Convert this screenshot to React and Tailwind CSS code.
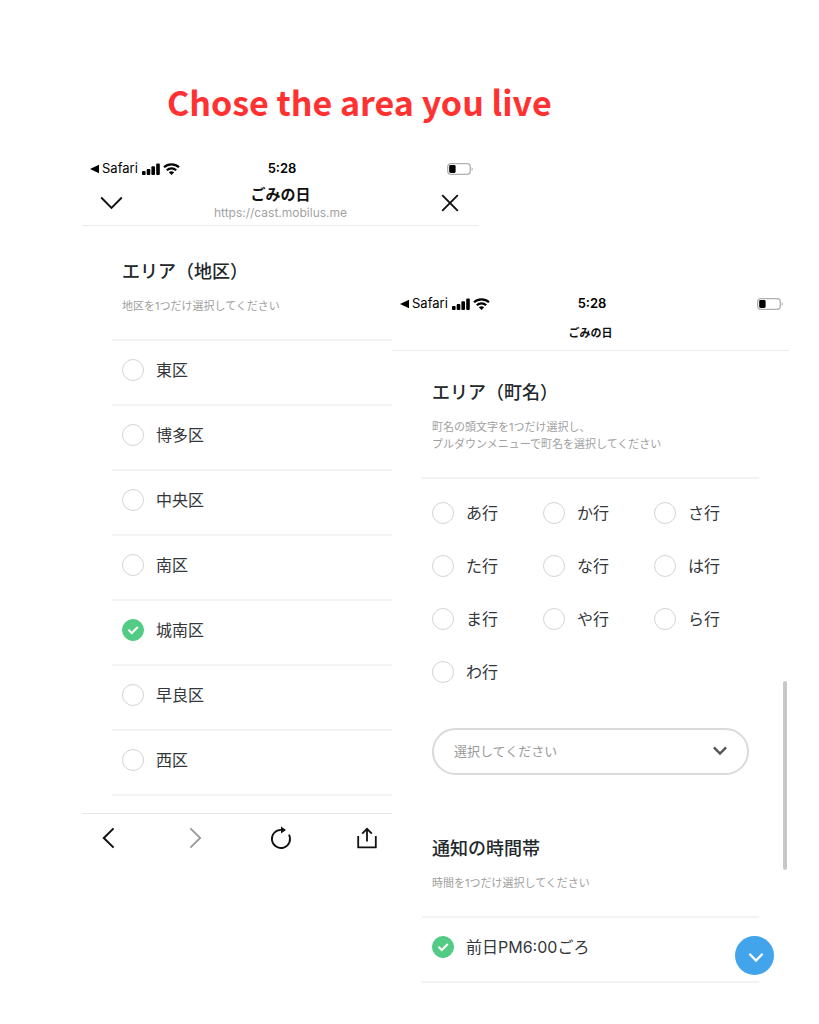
import React, { useState } from "react";

const areas = ["東区", "博多区", "中央区", "南区", "城南区", "早良区", "西区"];
const kanaRows = ["あ行", "か行", "さ行", "た行", "な行", "は行", "ま行", "や行", "ら行", "わ行"];

function StatusBar() {
  return (
    <div className="grid grid-cols-[1fr_auto_1fr] items-center h-[22px] pl-2 pr-[5px] text-[13px] text-black">
      <div className="flex items-center">
        <svg width="9" height="10" viewBox="0 0 9 10" className="mr-[3px]">
          <path d="M9 0.7v8.6L0 5z" fill="currentColor" />
        </svg>
        <span className="mr-1">Safari</span>
        <svg width="18" height="12" viewBox="0 0 18 12" className="mr-[3px]" fill="currentColor">
          <rect x="0" y="8" width="3.6" height="4" rx="1" />
          <rect x="4.7" y="6" width="3.6" height="6" rx="1" />
          <rect x="9.4" y="3.2" width="3.6" height="8.8" rx="1" />
          <rect x="14.2" y="0.4" width="3.6" height="11.6" rx="1" />
        </svg>
        <svg width="17" height="12" viewBox="0 0 17 12" fill="none" stroke="currentColor" strokeWidth="2.2">
          <path d="M1 4.3C5.2 0.3 11.8 0.3 16 4.3" />
          <path d="M3.8 7.2C6.4 4.7 10.6 4.7 13.2 7.2" />
          <path d="M8.5 12L5.8 9.2C7.3 7.8 9.7 7.8 11.2 9.2z" fill="currentColor" stroke="none" />
        </svg>
      </div>
      <span className="font-semibold">5:28</span>
      <svg width="27" height="12" viewBox="0 0 27 12" className="justify-self-end">
        <rect x="0.7" y="0.7" width="22.6" height="10.6" rx="3" fill="none" stroke="#b0b0b0" strokeWidth="1.3" />
        <rect x="2.2" y="2" width="6.4" height="8" rx="1.4" fill="#000" />
        <path d="M24.6 4.2c1.6 0.5 1.6 3.1 0 3.6z" fill="#b0b0b0" />
      </svg>
    </div>
  );
}

function Radio({ name, label, checked, onChange }) {
  return (
    <label className="flex items-center gap-3 text-base text-[#33373b] cursor-pointer">
      <span className="relative flex shrink-0">
        <input
          type="radio"
          name={name}
          value={label}
          checked={checked}
          onChange={onChange}
          className="peer appearance-none size-[22px] rounded-full border border-[#d4d4d4] bg-white checked:border-[#52cb84] checked:bg-[#52cb84]"
        />
        <svg
          viewBox="0 0 22 22"
          className="absolute inset-0 size-[22px] hidden peer-checked:block pointer-events-none"
          fill="none"
          stroke="#fff"
          strokeWidth="2"
        >
          <path d="M6.4 10.8L9.8 14L15.8 8" />
        </svg>
      </span>
      <span>{label}</span>
    </label>
  );
}

function SectionTitle({ title, children }) {
  return (
    <div className="px-[10px] pb-6 border-b-2 border-[#f3f3f3]">
      <h2 className="text-lg leading-7 font-medium text-[#23282c]">{title}</h2>
      <p className="mt-3 text-[11px] leading-[17px] text-[#a0a0a0]">{children}</p>
    </div>
  );
}

function AreaScreen() {
  const [area, setArea] = useState("城南区");

  return (
    <section className="col-start-1 col-span-2 row-start-1 bg-white">
      <StatusBar />
      <header className="grid grid-cols-[1fr_auto_1fr] items-center px-[18px] pt-[5px] pb-1 border-b border-[#ebebeb]">
        <button aria-label="Minimize" className="justify-self-start">
          <svg width="23" height="14" viewBox="0 0 23 14" fill="none" stroke="#111" strokeWidth="1.9">
            <path d="M1.2 1.5L11.5 11.8L21.8 1.5" />
          </svg>
        </button>
        <div className="text-center">
          <h1 className="text-[15px] leading-5 font-bold text-[#111]">ごみの日</h1>
          <p className="text-xs leading-4 text-[#a3a3a3]">https://cast.mobilus.me</p>
        </div>
        <button aria-label="Close" className="justify-self-end">
          <svg width="22" height="22" viewBox="0 0 22 22" fill="none" stroke="#111" strokeWidth="1.9">
            <path d="M3.2 3.2L18.8 18.8M18.8 3.2L3.2 18.8" />
          </svg>
        </button>
      </header>

      <div className="px-[30px] pt-8 pb-[17px]">
        <SectionTitle title="エリア（地区）">地区を1つだけ選択してください</SectionTitle>
        {areas.map((item) => (
          <div key={item} className="flex items-center h-[65px] pb-[6px] px-[10px] border-b-2 border-[#f3f3f3]">
            <Radio name="area" label={item} checked={area === item} onChange={() => setArea(item)} />
          </div>
        ))}
      </div>

      {/* Browser toolbar */}
      <nav className="flex items-center justify-between pl-[15px] pr-[100px] py-3 border-t border-[#e8e8e8]">
        <button aria-label="Back">
          <svg width="24" height="24" viewBox="0 0 24 24" fill="none" stroke="#111" strokeWidth="2">
            <path d="M16.6 2.4L6.8 12L16.6 21.6" />
          </svg>
        </button>
        <button aria-label="Forward">
          <svg width="24" height="24" viewBox="0 0 24 24" fill="none" stroke="#999" strokeWidth="1.8">
            <path d="M7.4 2.4L17.2 12L7.4 21.6" />
          </svg>
        </button>
        <button aria-label="Reload">
          <svg width="24" height="24" viewBox="0 0 24 24" fill="none" stroke="#111" strokeWidth="1.8">
            <path d="M12.4 3.8A9.1 9.1 0 1 0 20 8.6" />
            <path d="M12 0.6L17 4L12 7.4z" fill="#111" stroke="none" />
          </svg>
        </button>
        <button aria-label="Share">
          <svg width="24" height="24" viewBox="0 0 24 24" fill="none" stroke="#111" strokeWidth="1.8">
            <path d="M3.2 10V21.4H20.8V10" strokeLinejoin="round" />
            <path d="M12 15.6V3.2M7.2 7.6L12 2.8L16.8 7.6" />
          </svg>
        </button>
      </nav>
    </section>
  );
}

function TownScreen() {
  const [kana, setKana] = useState("");
  const [time, setTime] = useState("前日PM6:00ごろ");

  return (
    <section className="relative col-start-2 col-span-2 row-start-1 mt-[135px] bg-white">
      <StatusBar />
      <header className="h-9 border-b border-[#ebebeb]">
        <h1 className="text-[11px] leading-9 font-bold text-center text-[#111]">ごみの日</h1>
      </header>

      <div className="px-[30px] pt-7">
        <SectionTitle title="エリア（町名）">
          町名の頭文字を1つだけ選択し、
          <br />
          プルダウンメニューで町名を選択してください
        </SectionTitle>

        <div className="grid grid-cols-3 gap-x-4 px-[10px] pt-[7px]">
          {kanaRows.map((item) => (
            <div key={item} className="flex items-center h-[53px]">
              <Radio name="kana" label={item} checked={kana === item} onChange={() => setKana(item)} />
            </div>
          ))}
        </div>

        <div className="relative mx-[10px] mt-[30px]">
          <select
            aria-label="町名"
            className="block appearance-none w-full h-[47px] rounded-full border-2 border-[#dadada] bg-white px-5 text-[13px] text-[#999]"
          >
            <option>選択してください</option>
          </select>
          <svg
            width="14"
            height="10"
            viewBox="0 0 14 10"
            className="absolute right-[22px] top-[18px] pointer-events-none"
            fill="none"
            stroke="#555"
            strokeWidth="2.4"
          >
            <path d="M0.9 1.4L7 7.6L13.1 1.4" />
          </svg>
        </div>

        <div className="pt-[60px]">
          <SectionTitle title="通知の時間帯">時間を1つだけ選択してください</SectionTitle>
          <div className="flex items-center h-[65px] pb-[6px] px-[10px] border-b-2 border-[#f3f3f3]">
            <Radio
              name="time"
              label="前日PM6:00ごろ"
              checked={time === "前日PM6:00ごろ"}
              onChange={() => setTime("前日PM6:00ごろ")}
            />
          </div>
        </div>
      </div>

      {/* Scroll indicator */}
      <div className="absolute right-[2px] top-[388px] w-1 h-[189px] rounded-full bg-[#c8c8c8]" />

      <button
        aria-label="Scroll down"
        className="absolute right-[15px] bottom-[8px] size-[39px] rounded-full bg-[#42a5ec] flex items-center justify-center"
      >
        <svg width="16" height="12" viewBox="0 0 16 12" fill="none" stroke="#fff" strokeWidth="2.2" className="mt-1 ml-[2px]">
          <path d="M1.4 1.8L8 8.6L14.6 1.8" />
        </svg>
      </button>
    </section>
  );
}

export default function App() {
  return (
    <main className="min-h-screen bg-white pt-[78px] pl-[82px] pr-[30px] pb-10 font-['Inter','Noto_Sans_CJK_JP',sans-serif]">
      <p className="mb-8 pl-[85px] font-['Noto_Sans_CJK_JP',sans-serif] text-[34px] leading-[48px] font-bold text-[#ff3131]">
        Chose the area you live
      </p>
      <div className="grid grid-cols-[310fr_87fr_310fr] items-start">
        <AreaScreen />
        <TownScreen />
      </div>
    </main>
  );
}
